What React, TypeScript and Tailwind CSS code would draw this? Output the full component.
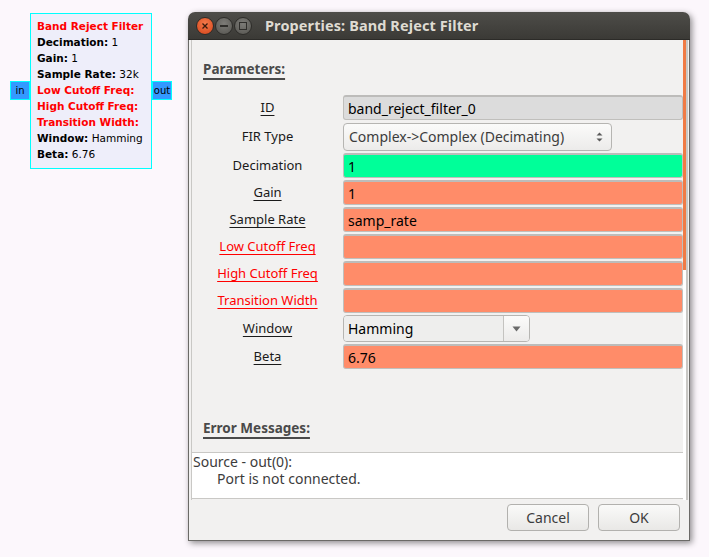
import { ReactNode } from "react";

const UI = { fontFamily: '"Noto Sans", "Open Sans", sans-serif' };
const BLOCK = { fontFamily: '"DejaVu Sans", sans-serif' };

type Param = {
  label: string;
  kind: "entry" | "combo" | "select";
  value: string;
  bg?: string;
  underline?: boolean;
  red?: boolean;
};

const PARAMS: Param[] = [
  { label: "ID", kind: "entry", value: "band_reject_filter_0", bg: "bg-[#dcdcdc]", underline: true },
  { label: "FIR Type", kind: "combo", value: "Complex->Complex (Decimating)" },
  { label: "Decimation", kind: "entry", value: "1", bg: "bg-[#00ff99]" },
  { label: "Gain", kind: "entry", value: "1", bg: "bg-[#ff8c69]", underline: true },
  { label: "Sample Rate", kind: "entry", value: "samp_rate", bg: "bg-[#ff8c69]", underline: true },
  { label: "Low Cutoff Freq", kind: "entry", value: "", bg: "bg-[#ff8c69]", underline: true, red: true },
  { label: "High Cutoff Freq", kind: "entry", value: "", bg: "bg-[#ff8c69]", underline: true, red: true },
  { label: "Transition Width", kind: "entry", value: "", bg: "bg-[#ff8c69]", underline: true, red: true },
  { label: "Window", kind: "select", value: "Hamming", underline: true },
  { label: "Beta", kind: "entry", value: "6.76", bg: "bg-[#ff8c69]", underline: true },
];

function BlockLine({ k, v, red }: { k: string; v?: string; red?: boolean }) {
  return (
    <div className="h-4 leading-4 whitespace-nowrap">
      <span className={`font-bold ${red ? "text-[#ff0000]" : "text-black"}`}>{k}</span>
      {v ? <span className="text-black"> {v}</span> : null}
    </div>
  );
}

function Port({ children }: { children: ReactNode }) {
  return (
    <div className="mt-[68px] w-[20px] h-[19px] bg-[#3399ff] border border-[#00ffff] text-[10px] leading-[17px] text-black flex justify-center overflow-hidden">
      {children}
    </div>
  );
}

function FlowBlock() {
  return (
    <div className="flex items-start mt-[13px] ml-[10px] text-[10.5px]" style={BLOCK}>
      <Port>in</Port>
      <div className="w-[122px] h-[156px] bg-[#eeeefa] border border-[#00ffff] pl-[6px] pt-[4px]">
        <BlockLine k="Band Reject Filter" red />
        <BlockLine k="Decimation:" v="1" />
        <BlockLine k="Gain:" v="1" />
        <BlockLine k="Sample Rate:" v="32k" />
        <BlockLine k="Low Cutoff Freq:" red />
        <BlockLine k="High Cutoff Freq:" red />
        <BlockLine k="Transition Width:" red />
        <BlockLine k="Window:" v="Hamming" />
        <BlockLine k="Beta:" v="6.76" />
      </div>
      <Port>out</Port>
    </div>
  );
}

function WinButton({ kind }: { kind: "close" | "min" | "max" }) {
  const bg =
    kind === "close"
      ? "bg-[radial-gradient(circle_at_50%_35%,#f47a4a,#d5441a)]"
      : "bg-[radial-gradient(circle_at_50%_35%,#7d7c78,#55544f)]";
  return (
    <div className={`w-[18px] h-[18px] rounded-full ${bg} border border-[#2d2c29] flex items-center justify-center`}>
      {kind === "close" && (
        <svg width="8" height="8" viewBox="0 0 8 8">
          <path d="M1.5 1.5 L6.5 6.5 M6.5 1.5 L1.5 6.5" stroke="#3a1a0c" strokeWidth="1.3" />
        </svg>
      )}
      {kind === "min" && <div className="w-[8px] h-[2px] bg-[#2f2e2b]" />}
      {kind === "max" && <div className="w-[8px] h-[8px] border-[1.5px] border-[#2f2e2b]" />}
    </div>
  );
}

function Field({ p }: { p: Param }) {
  if (p.kind === "combo") {
    return (
      <div className="w-[269px] h-[28px] rounded-[4px] border border-[#b6b5b2] bg-gradient-to-b from-[#fbfbfa] to-[#ecebea] flex items-center pl-[5px] pr-[8px] text-[14px] text-[#3c3c3c]">
        <span className="flex-1">{p.value}</span>
        <svg width="7" height="12" viewBox="0 0 7 12">
          <path d="M0.5 4.5 L3.5 1.5 L6.5 4.5 Z M0.5 7.5 L3.5 10.5 L6.5 7.5 Z" fill="#5a5a5a" />
        </svg>
      </div>
    );
  }
  if (p.kind === "select") {
    return (
      <div className="w-[187px] h-[27px] flex rounded-[4px] border border-[#b6b5b2] overflow-hidden">
        <div className="flex-1 bg-[#eeeeed] flex items-center pl-[4px] text-[14px] text-black">{p.value}</div>
        <div className="w-[26px] border-l border-[#c4c3c0] bg-gradient-to-b from-[#fbfbfa] to-[#ecebea] flex items-center justify-center">
          <svg width="9" height="6" viewBox="0 0 9 6">
            <path d="M0.5 0.5 H8.5 L4.5 5.5 Z" fill="#6a6a6a" />
          </svg>
        </div>
      </div>
    );
  }
  return (
    <div
      className={`h-[25px] flex-1 rounded-[3px] border border-[#c0bfbc] border-t-[2px] border-t-[#bdbcba] ${p.bg} flex items-center pl-[4px] text-[14px] text-black`}
    >
      {p.value}
    </div>
  );
}

function Row({ p }: { p: Param }) {
  const h = p.kind === "combo" ? "h-[29px] mb-[2px]" : p.kind === "select" ? "h-[27px] mb-[2px]" : "h-[25px] mb-[2px]";
  return (
    <div className={`flex items-center ${h}`}>
      <div className="w-[151px] shrink-0 flex justify-center">
        <span
          className={`text-[13px] ${p.red ? "text-[#ff0000]" : "text-[#1a1a1a]"} ${
            p.underline ? "underline decoration-1 underline-offset-[3px]" : ""
          }`}
        >
          {p.label}
        </span>
      </div>
      <Field p={p} />
    </div>
  );
}

function Btn({ children }: { children: ReactNode }) {
  return (
    <div className="w-[82px] h-[27px] rounded-[4px] border border-[#b2b1ae] bg-gradient-to-b from-[#fafaf9] to-[#e9e8e6] flex items-center justify-center text-[14px] text-[#3c3c3c]">
      {children}
    </div>
  );
}

function Dialog() {
  return (
    <div
      className="mt-[12px] ml-[16px] w-[502px] h-[529px] rounded-t-[7px] flex flex-col shadow-[2px_2px_6px_rgba(0,0,0,0.45)]"
      style={UI}
    >
      <div className="h-[28px] rounded-t-[7px] bg-gradient-to-b from-[#4e4d49] to-[#3b3a36] flex items-center pl-[8px] border-b border-[#2c2b28]">
        <div className="flex gap-[1px]">
          <WinButton kind="close" />
          <WinButton kind="min" />
          <WinButton kind="max" />
        </div>
        <span className="ml-[13px] text-[14.5px] font-bold text-[#dfdbd2] tracking-[0.1px]">Properties: Band Reject Filter</span>
      </div>
      <div className="flex-1 bg-[#f2f1f0] border-x border-b border-[#6b6a67] flex flex-col">
        <div className="flex h-[460px] ml-[2px] mr-[1px]">
          <div className="flex-1 min-w-0 border-l border-[#c9c8c5] flex flex-col">
            <div className="pl-[11px] pt-[16px] h-[55px]">
              <span className="text-[13.5px] font-bold text-[#4a4a4a] underline decoration-2 underline-offset-[4px]">
                Parameters:
              </span>
            </div>
            <div className="flex flex-col">
              {PARAMS.map((p) => (
                <Row key={p.label} p={p} />
              ))}
            </div>
            <div className="pl-[11px] pt-[44px] h-[81px]">
              <span className="text-[13.5px] font-bold text-[#4a4a4a] underline decoration-2 underline-offset-[4px]">
                Error Messages:
              </span>
            </div>
            <div className="h-[47px] bg-white border-t border-b border-[#c9c8c5] text-[14px] leading-[17px] text-[#3c3c3c] pl-[1px]">
              <div>Source - out(0):</div>
              <div className="pl-[24px]">Port is not connected.</div>
            </div>
          </div>
          <div className="w-[3px] flex flex-col">
            <div className="h-[230px] bg-[#f07b45]" />
            <div className="flex-1 bg-white" />
          </div>
          <div className="w-[2px] bg-[#c9c8c5]" />
        </div>
        <div className="flex justify-end gap-[9px] pr-[9px] pt-[4px]">
          <Btn>Cancel</Btn>
          <Btn>OK</Btn>
        </div>
      </div>
    </div>
  );
}

export default function App() {
  return (
    <div className="w-[709px] h-[557px] bg-[#fcf7fc] flex items-start overflow-hidden">
      <FlowBlock />
      <Dialog />
    </div>
  );
}
